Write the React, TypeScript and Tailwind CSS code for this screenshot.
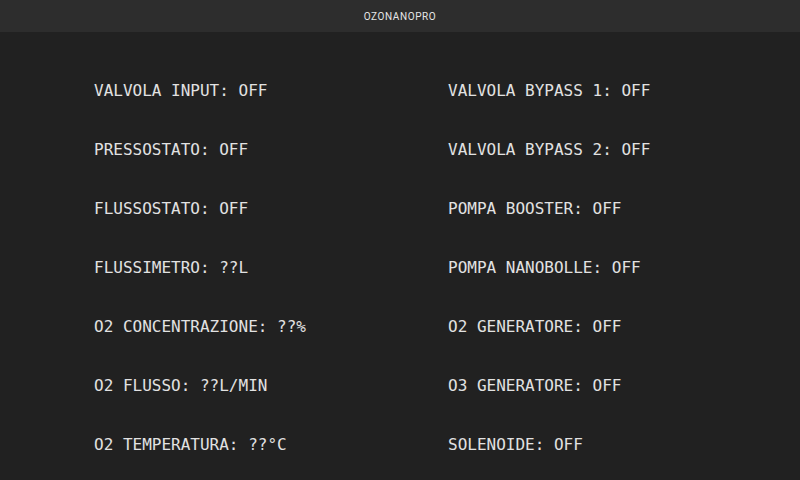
import React from "react";

const left = [
  "VALVOLA INPUT: OFF",
  "PRESSOSTATO: OFF",
  "FLUSSOSTATO: OFF",
  "FLUSSIMETRO: ??L",
  "O2 CONCENTRAZIONE: ??%",
  "O2 FLUSSO: ??L/MIN",
  "O2 TEMPERATURA: ??°C",
];
const right = [
  "VALVOLA BYPASS 1: OFF",
  "VALVOLA BYPASS 2: OFF",
  "POMPA BOOSTER: OFF",
  "POMPA NANOBOLLE: OFF",
  "O2 GENERATORE: OFF",
  "O3 GENERATORE: OFF",
  "SOLENOIDE: OFF",
];

export default function App() {
  const cells: string[] = [];
  left.forEach((l, i) => {
    cells.push(l);
    cells.push(right[i]);
  });
  return (
    <div className="w-[800px] h-[480px] bg-[#212121] overflow-hidden flex flex-col">
      <div className="h-8 bg-[#2d2d2d] flex items-center justify-center shrink-0">
        <span className="text-[10px] text-[#e6e6e6] tracking-[0.06em] [font-family:Roboto,'Noto_Sans',sans-serif]">
          OZONANOPRO
        </span>
      </div>
      <div className="pt-[29px] pl-[94px] grid grid-cols-[354px_1fr]">
        {cells.map((c, i) => (
          <div
            key={i}
            className="h-[59px] flex items-center text-[16px] leading-none text-[#e2e2e2] [font-family:'DejaVu_Sans_Mono','Liberation_Mono',monospace]"
          >
            {c}
          </div>
        ))}
      </div>
    </div>
  );
}
